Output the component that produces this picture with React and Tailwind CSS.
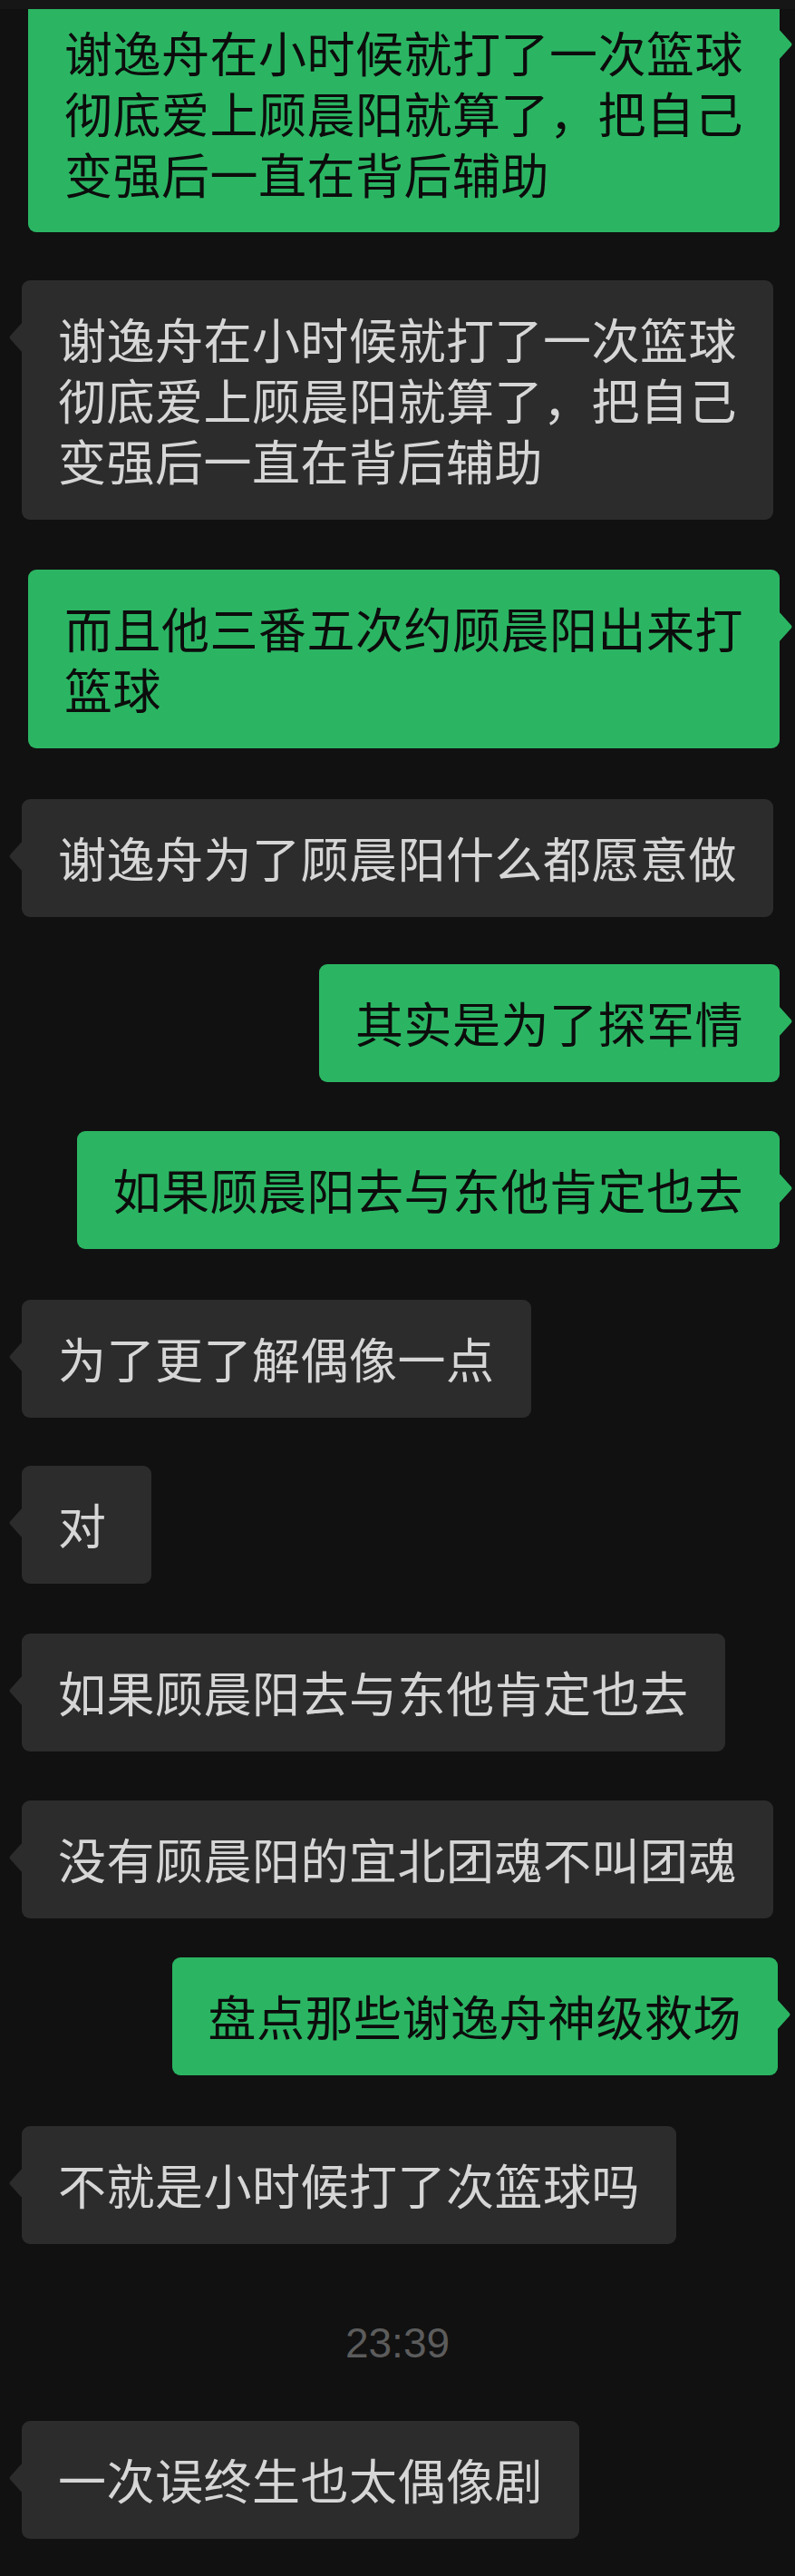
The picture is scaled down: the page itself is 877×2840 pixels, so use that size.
import React from 'react';

// chat messages, top to bottom
const messages = [
  {
    me: true,
    lines: ['谢逸舟在小时候就打了一次篮球', '彻底爱上顾晨阳就算了，把自己', '变强后一直在背后辅助'],
    row: 'mt-[10px]',
    bubble: 'rounded-t-none pt-[14px] pb-[31px]',
    tail: 'top-[22px]',
  },
  {
    me: false,
    lines: ['谢逸舟在小时候就打了一次篮球', '彻底爱上顾晨阳就算了，把自己', '变强后一直在背后辅助'],
    row: 'mt-[53px]',
    bubble: 'pt-[31px] pb-[32px]',
  },
  {
    me: true,
    lines: ['而且他三番五次约顾晨阳出来打', '篮球'],
    row: 'mt-[55px]',
    bubble: 'pt-[31px] pb-[32px]',
  },
  { me: false, lines: ['谢逸舟为了顾晨阳什么都愿意做'], row: 'mt-[56px]', bubble: 'pt-[31px] pb-[32px]' },
  { me: true, lines: ['其实是为了探军情'], row: 'mt-[52px]', bubble: 'pt-[31px] pb-[32px]' },
  { me: true, lines: ['如果顾晨阳去与东他肯定也去'], row: 'mt-[54px]', bubble: 'pt-[31px] pb-[32px]' },
  { me: false, lines: ['为了更了解偶像一点'], row: 'mt-[56px]', bubble: 'pt-[31px] pb-[32px]' },
  { me: false, lines: ['对'], row: 'mt-[53px]', bubble: 'w-[143px] pt-[31px] pb-[32px]' },
  { me: false, lines: ['如果顾晨阳去与东他肯定也去'], row: 'mt-[55px]', bubble: 'pt-[31px] pb-[32px]' },
  { me: false, lines: ['没有顾晨阳的宜北团魂不叫团魂'], row: 'mt-[54px]', bubble: 'pt-[31px] pb-[32px]' },
  { me: true, lines: ['盘点那些谢逸舟神级救场'], row: 'mt-[43px] pr-[19px]', bubble: 'pt-[31px] pb-[32px]' },
  { me: false, lines: ['不就是小时候打了次篮球吗'], row: 'mt-[56px] pl-[19px]', bubble: 'pt-[31px] pb-[32px]' },
  { time: '23:39' },
  { me: false, lines: ['一次误终生也太偶像剧'], row: 'mt-[63px] pl-[19px]', bubble: 'pt-[31px] pb-[32px]' },
];

const Tail = ({ me, pos }) => (
  <svg
    width="16"
    height="34"
    viewBox="0 0 16 34"
    className={`absolute ${pos || 'top-[46px]'} ${me ? 'left-full -ml-px' : 'right-full -mr-px -scale-x-100'}`}
  >
    <path d="M0 0 L13.5 15 Q15.5 17 13.5 19 L0 34 Z" fill={me ? '#2bb563' : '#2c2c2c'} />
  </svg>
);

const Bubble = ({ msg }) => {
  const color = msg.me ? 'bg-[#2bb563] text-[#0c0c0c]' : 'bg-[#2c2c2c] text-[#d6d6d6]';
  return (
    <div className={`relative rounded-[9px] px-[40px] text-[53px] leading-[67px] tracking-[0.5px] whitespace-nowrap ${color} ${msg.bubble}`}>
      {msg.lines.map((line, i) => (
        <div key={i}>{line}</div>
      ))}
      <Tail me={msg.me} pos={msg.tail} />
    </div>
  );
};

export default function App() {
  return (
    <div
      className="w-full h-[2840px] bg-[#111111] overflow-hidden"
      style={{ fontFamily: '"Noto Sans CJK SC", "Noto Sans", sans-serif' }}
    >
      <div className="h-[10px] bg-[#161616] -mb-[10px]" />
      <div className="flex flex-col">
        {messages.map((msg, i) => {
          if (msg.time) {
            return (
              <div
                key={i}
                className="mt-[86px] text-center text-[46px] leading-[46px] text-[#5c5c5c]"
                style={{ fontFamily: '"Liberation Sans", Arial, sans-serif' }}
              >
                {msg.time}
              </div>
            );
          }
          const side = msg.me ? 'justify-end pr-[17px]' : 'justify-start pl-[24px]';
          return (
            <div key={i} className={`flex ${side} ${msg.row}`}>
              <Bubble msg={msg} />
            </div>
          );
        })}
      </div>
    </div>
  );
}
